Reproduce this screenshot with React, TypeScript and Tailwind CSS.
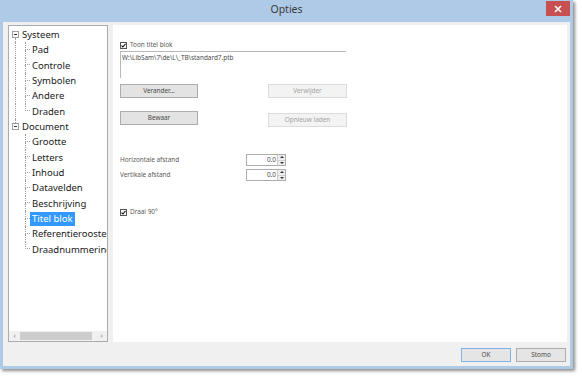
import React from "react";

type Item = { label: string; children?: string[] };

const tree: Item[] = [
  { label: "Systeem", children: ["Pad", "Controle", "Symbolen", "Andere", "Draden"] },
  {
    label: "Document",
    children: [
      "Grootte",
      "Letters",
      "Inhoud",
      "Datavelden",
      "Beschrijving",
      "Titel blok",
      "Referentierooster",
      "Draadnummering",
    ],
  },
];

const selected = "Titel blok";

function Check({ label }: { label: string }) {
  return (
    <div className="flex h-[10px] items-center gap-[3px]">
      <span className="flex h-[7px] w-[7px] items-center justify-center border border-[#555] bg-white">
        <svg width="5" height="5" viewBox="0 0 5 5">
          <path d="M0.5 2.6 L1.9 4 L4.5 0.8" fill="none" stroke="#111" strokeWidth="1.1" />
        </svg>
      </span>
      <span className="text-[6.4px] text-[#5a5a5a]">{label}</span>
    </div>
  );
}

function Btn({ label, disabled, className = "" }: { label: string; disabled?: boolean; className?: string }) {
  return (
    <div
      className={
        "flex h-[14px] items-center justify-center border text-[6.4px] " +
        (disabled
          ? "border-[#DCDCDC] bg-[#F3F3F3] text-[#A3A3A3] "
          : "border-[#ACACAC] bg-[#E3E3E3] text-[#4a4a4a] ") +
        className
      }
    >
      {label}
    </div>
  );
}

function Spin({ label }: { label: string }) {
  return (
    <div className="flex h-[12px] items-center">
      <span className="w-[126px] text-[6.4px] text-[#5a5a5a]">{label}</span>
      <div className="flex h-[12px] w-[40px] border border-[#ABADB3] bg-white">
        <span className="flex-1 pr-[1px] text-right text-[6.4px] leading-[10px] text-[#4a4a4a]">0.0</span>
        <div className="flex w-[8px] flex-col border-l border-[#D0D0D0] bg-[#EDEDED]">
          <div className="flex flex-1 items-center justify-center border-b border-[#D0D0D0]">
            <svg width="4" height="2" viewBox="0 0 4 2">
              <path d="M0 2 L2 0 L4 2 Z" fill="#333" />
            </svg>
          </div>
          <div className="flex flex-1 items-center justify-center">
            <svg width="4" height="2" viewBox="0 0 4 2">
              <path d="M0 0 L2 2 L4 0 Z" fill="#333" />
            </svg>
          </div>
        </div>
      </div>
    </div>
  );
}

function Tree() {
  return (
    <div className="flex-1 pt-[1px] text-[9.5px] text-[#1a1a1a]">
      {tree.map((root, ri) => {
        const first = ri === 0;
        const last = ri === tree.length - 1;
        return (
          <div key={root.label}>
            <div className="flex h-[15.35px] items-center">
              <div className="w-[3px] shrink-0" />
              <div className="flex h-full w-[7px] shrink-0 flex-col items-center">
                <div className={"w-0 flex-1 " + (first ? "" : "border-l border-dotted border-[#A0A0A0]")} />
                <div className="flex h-[7px] w-[7px] items-center justify-center border border-[#A0A0A0] bg-white">
                  <div className="h-px w-[3px] bg-[#333]" />
                </div>
                <div className={"w-0 flex-1 " + (last ? "" : "border-l border-dotted border-[#A0A0A0]")} />
              </div>
              <span className="ml-[3px] shrink-0 whitespace-nowrap leading-none">{root.label}</span>
            </div>
            {root.children?.map((c, ci) => {
              const lastChild = ci === (root.children?.length ?? 0) - 1;
              const sel = c === selected;
              return (
                <div key={c} className="flex h-[15.35px] items-stretch">
                  <div className="w-[6px] shrink-0" />
                  <div className={"w-[10px] shrink-0 " + (last ? "" : "border-l border-dotted border-[#A0A0A0]")} />
                  <div className="flex w-[5px] shrink-0 flex-col">
                    <div className="h-1/2 border-b border-l border-dotted border-[#A0A0A0]" />
                    <div className={"h-1/2 " + (lastChild ? "" : "border-l border-dotted border-[#A0A0A0]")} />
                  </div>
                  <div className="flex shrink-0 items-center">
                    <span
                      className={
                        "whitespace-nowrap px-[2px] py-[2px] leading-none " + (sel ? "bg-[#3399FF] text-white" : "")
                      }
                    >
                      {c}
                    </span>
                  </div>
                </div>
              );
            })}
          </div>
        );
      })}
    </div>
  );
}

export default function App() {
  return (
    <div
      className="h-[378px] w-[582px] overflow-hidden bg-white"
      style={{ fontFamily: '"Noto Sans", "Open Sans", sans-serif' }}
    >
      <div className="flex h-[369px] w-[573px] flex-col bg-[#AECAE6] px-[3px] pb-[3px] shadow-[2px_2px_3px_rgba(0,0,0,0.45)]">
        <div className="flex h-[22px] items-start">
          <div className="flex h-[20px] flex-1 items-center justify-center pl-[24px] text-[10.5px] text-[#3b3b3b]">
            Opties
          </div>
          <div className="mt-px flex h-[15px] w-[24px] items-center justify-center bg-[#C75050]">
            <svg width="8" height="8" viewBox="0 0 8 8">
              <path d="M1 1 L7 7 M7 1 L1 7" stroke="#fff" strokeWidth="1.6" />
            </svg>
          </div>
        </div>
        <div className="flex flex-1 flex-col bg-[#F0F0F0] pl-[5px] pr-[3px] pt-[3px]">
          <div className="flex h-[317px] gap-[5px]">
            <div className="flex w-[100px] shrink-0 flex-col overflow-hidden border border-[#A9ABB0] bg-white">
              <Tree />
              <div className="flex h-[10px] shrink-0 items-center bg-[#F0F0F0] text-[7px] text-[#777]">
                <span className="w-[11px] text-center">‹</span>
                <div className="h-[8px] w-[72px] bg-[#CDCDCD]" />
                <div className="flex-1" />
                <span className="w-[11px] text-center">›</span>
              </div>
            </div>
            <div className="flex flex-1 flex-col bg-white pl-[7px] pt-[15px]">
              <Check label="Toon titel blok" />
              <div className="mt-px h-[27px] w-[226px] border-l border-t border-[#B8B8B8] pl-px pt-px text-[6.4px] text-[#4a4a4a]">
                W:\LibSam\7\de\L\_TB\standard7.ptb
              </div>
              <div className="mt-[6px] flex w-[227px] justify-between">
                <Btn label="Verander..." className="w-[78px]" />
                <Btn label="Verwijder" disabled className="w-[79px]" />
              </div>
              <div className="mt-[13px] flex w-[227px] items-start justify-between">
                <Btn label="Bewaar" className="w-[78px]" />
                <Btn label="Opnieuw laden" disabled className="mt-[2px] w-[79px]" />
              </div>
              <div className="mt-[27px]">
                <Spin label="Horizontale afstand" />
              </div>
              <div className="mt-[3px]">
                <Spin label="Vertikale afstand" />
              </div>
              <div className="mt-[26px]">
                <Check label="Draai 90°" />
              </div>
            </div>
          </div>
          <div className="mt-[6px] flex justify-end gap-[5px] pr-px">
            <div className="flex h-[14px] w-[50px] items-center justify-center border border-[#7EB4EA] bg-[#E5E5E5] text-[6.4px] text-[#4a4a4a]">
              OK
            </div>
            <div className="flex h-[14px] w-[50px] items-center justify-center border border-[#ACACAC] bg-[#E5E5E5] text-[6.4px] text-[#4a4a4a]">
              Stomo
            </div>
          </div>
        </div>
      </div>
    </div>
  );
}
